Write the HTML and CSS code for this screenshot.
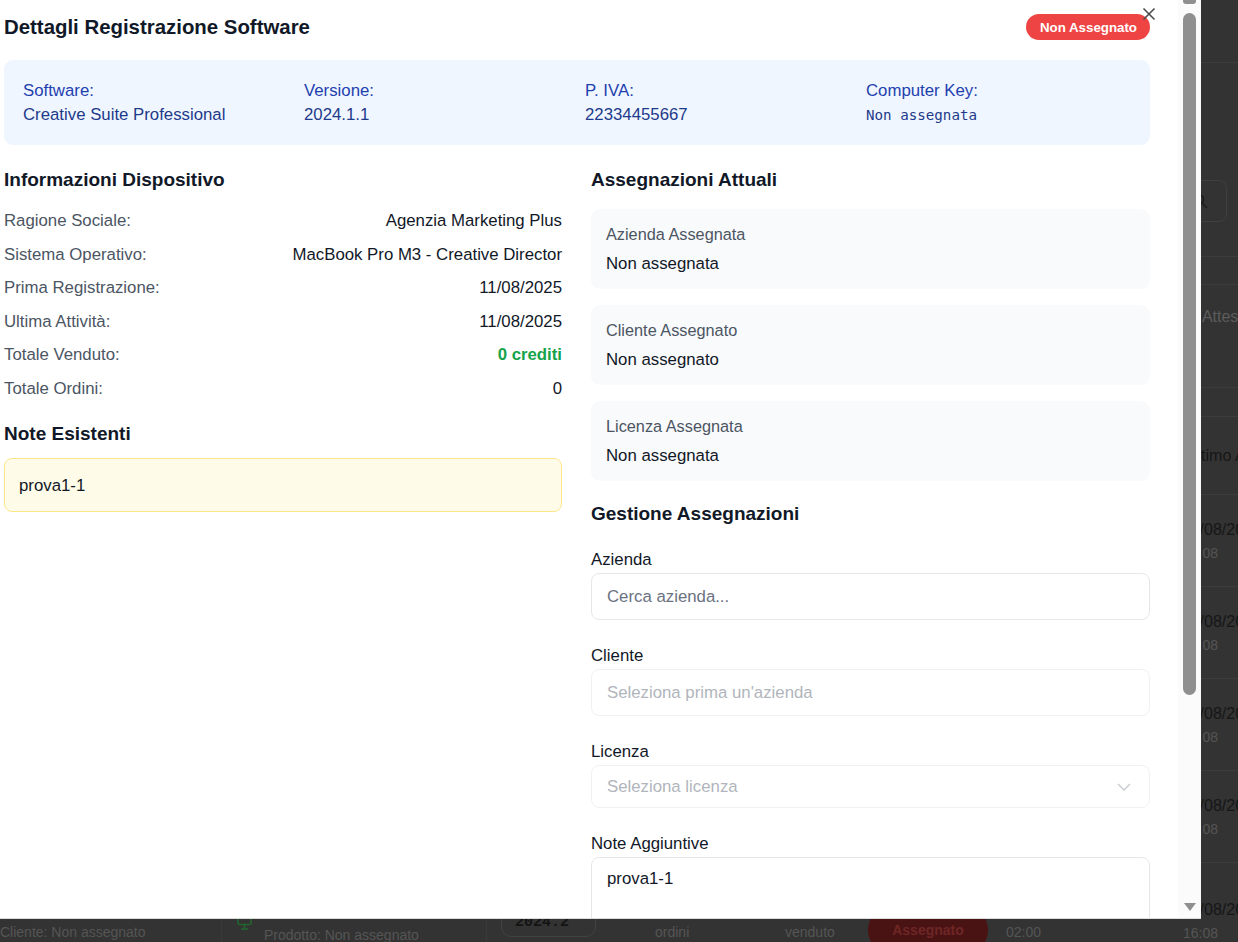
FILE: index.html
```html
<!DOCTYPE html>
<html lang="it">
<head>
<meta charset="utf-8">
<title>Dettagli Registrazione Software</title>
<link rel="stylesheet" href="styles.css">
</head>
<body>
<div class="page">
  <div class="pg-top"></div>
  <div class="pg-toolbar">
    <div class="pg-search">
      <svg class="pg-search-icon" width="16" height="16" viewBox="0 0 16 16"><circle cx="6.5" cy="6.5" r="5" fill="none" stroke="#1c1c1c" stroke-width="1.6"/><line x1="10.2" y1="10.2" x2="14.5" y2="14.5" stroke="#1c1c1c" stroke-width="1.6" stroke-linecap="round"/></svg>
    </div>
  </div>
  <div class="pg-tabs"></div>
  <div class="pg-grid pg-stats"><div class="pg-last pg-stat">In Attesa</div></div>
  <div class="pg-gap"></div>
  <div class="pg-grid pg-thead"><div class="pg-last pg-th">Ultimo Accesso</div></div>
  <div class="pg-grid pg-row"><div class="pg-last"><div class="pg-date">11/08/2025</div><div class="pg-sub">16:08</div></div></div>
  <div class="pg-grid pg-row"><div class="pg-last"><div class="pg-date">11/08/2025</div><div class="pg-sub">16:08</div></div></div>
  <div class="pg-grid pg-row"><div class="pg-last"><div class="pg-date">11/08/2025</div><div class="pg-sub">16:08</div></div></div>
  <div class="pg-grid pg-row"><div class="pg-last"><div class="pg-date">11/08/2025</div><div class="pg-sub">16:08</div></div></div>
  <div class="pg-grid pg-row pg-row-big">
    <div class="pg-cell pg-c1"><div class="pg-main">Agenzia Design</div><div class="pg-sub">Cliente: Non assegnato</div></div>
    <div class="pg-cell pg-c2">
      <svg class="pg-monitor" width="16" height="20" viewBox="0 0 16 20"><rect x="1" y="2" width="13" height="10.5" rx="1.5" fill="none" stroke="#22652f" stroke-width="1.6"/><line x1="7.5" y1="12.5" x2="7.5" y2="16.5" stroke="#22652f" stroke-width="1.6"/><line x1="4" y1="17" x2="11" y2="17" stroke="#22652f" stroke-width="1.6"/></svg>
      <div><div class="pg-main pg-bold">Modeling</div><div class="pg-sub">Prodotto: Non assegnato</div></div>
    </div>
    <div class="pg-cell pg-c3"><span class="pg-ver">2024.2</span></div>
    <div class="pg-cell pg-c4"><div class="pg-main">0</div><div class="pg-sub">ordini</div></div>
    <div class="pg-cell pg-c5"><div class="pg-main">0 crediti</div><div class="pg-sub">venduto</div></div>
    <div class="pg-cell pg-c6"><span class="pg-badge">Assegnato</span></div>
    <div class="pg-cell pg-c7"><div class="pg-main">11/08/2025</div><div class="pg-sub">02:00</div></div>
    <div class="pg-last"><div class="pg-date">11/08/2025</div><div class="pg-sub">16:08</div></div>
  </div>
</div>

<div class="modal">
  <div class="modal-inner">
    <header class="m-head">
      <h2 class="m-title">Dettagli Registrazione Software</h2>
      <span class="badge">Non Assegnato</span>
    </header>

    <section class="info">
      <div class="info-item"><div class="info-label">Software:</div><div class="info-val">Creative Suite Professional</div></div>
      <div class="info-item"><div class="info-label">Versione:</div><div class="info-val">2024.1.1</div></div>
      <div class="info-item"><div class="info-label">P. IVA:</div><div class="info-val">22334455667</div></div>
      <div class="info-item"><div class="info-label">Computer Key:</div><div class="info-val info-mono">Non assegnata</div></div>
    </section>

    <div class="cols">
      <div class="col">
        <h3 class="sec-title">Informazioni Dispositivo</h3>
        <div class="rows">
          <div class="row"><span class="row-label">Ragione Sociale:</span><span class="row-val">Agenzia Marketing Plus</span></div>
          <div class="row"><span class="row-label">Sistema Operativo:</span><span class="row-val">MacBook Pro M3 - Creative Director</span></div>
          <div class="row"><span class="row-label">Prima Registrazione:</span><span class="row-val">11/08/2025</span></div>
          <div class="row"><span class="row-label">Ultima Attività:</span><span class="row-val">11/08/2025</span></div>
          <div class="row"><span class="row-label">Totale Venduto:</span><span class="row-val row-green">0 crediti</span></div>
          <div class="row"><span class="row-label">Totale Ordini:</span><span class="row-val">0</span></div>
        </div>
        <h3 class="sec-title sec-note">Note Esistenti</h3>
        <div class="note">prova1-1</div>
      </div>

      <div class="col">
        <h3 class="sec-title">Assegnazioni Attuali</h3>
        <div class="cards">
          <div class="card"><div class="card-label">Azienda Assegnata</div><div class="card-val">Non assegnata</div></div>
          <div class="card"><div class="card-label">Cliente Assegnato</div><div class="card-val">Non assegnato</div></div>
          <div class="card"><div class="card-label">Licenza Assegnata</div><div class="card-val">Non assegnata</div></div>
        </div>
        <h3 class="sec-title sec-manage">Gestione Assegnazioni</h3>
        <div class="form">
          <div class="field">
            <label class="f-label">Azienda</label>
            <div class="f-input"><span class="ph">Cerca azienda...</span></div>
          </div>
          <div class="field">
            <label class="f-label">Cliente</label>
            <div class="f-input f-disabled"><span class="ph ph-light">Seleziona prima un'azienda</span></div>
          </div>
          <div class="field">
            <label class="f-label">Licenza</label>
            <div class="f-input f-select f-disabled"><span class="ph ph-light">Seleziona licenza</span>
              <svg class="chev" width="14" height="8" viewBox="0 0 14 8"><polyline points="1,1 7,7 13,1" fill="none" stroke="#c8cbd0" stroke-width="1.4"/></svg>
            </div>
          </div>
          <div class="field">
            <label class="f-label">Note Aggiuntive</label>
            <div class="f-textarea">prova1-1</div>
          </div>
        </div>
      </div>
    </div>
  </div>

  <div class="close" aria-label="Chiudi">
    <svg width="14" height="14" viewBox="0 0 14 14"><line x1="1.5" y1="1.5" x2="12.5" y2="12.5" stroke="#4b4b4b" stroke-width="1.6"/><line x1="12.5" y1="1.5" x2="1.5" y2="12.5" stroke="#4b4b4b" stroke-width="1.6"/></svg>
  </div>

  <div class="scrollbar">
    <div class="sb-top"></div>
    <div class="sb-thumb"></div>
    <svg class="sb-down" width="14" height="10" viewBox="0 0 14 10"><polygon points="1,1 13,1 7,9" fill="#8f8f8f"/></svg>
  </div>
</div>
</body>
</html>
```

FILE: styles.css
```css
* { box-sizing: border-box; }

body {
  margin: 0;
  width: 1238px;
  height: 942px;
  overflow: hidden;
  position: relative;
  background: #333333;
  font-family: "Liberation Sans", Arial, sans-serif;
  color: #111827;
}

/* ---------- background page (under the overlay) ---------- */
.page {
  display: flex;
  flex-direction: column;
  width: 1238px;
  white-space: nowrap;
}
.pg-top { height: 63px; border-bottom: 1px solid #3c3c3c; }
.pg-toolbar {
  height: 194px;
  display: flex;
  justify-content: flex-end;
  align-items: flex-start;
  padding: 117px 11px 0 0;
  border-bottom: 1px solid #3c3c3c;
}
.pg-search {
  width: 80px;
  height: 42px;
  border: 1px solid #404040;
  border-radius: 8px;
  display: flex;
  align-items: center;
  padding-left: 44px;
}
.pg-tabs { height: 28px; border-bottom: 1px solid #3c3c3c; }
.pg-grid {
  display: grid;
  grid-template-columns: 222px 265px 133px 120px 115px 145px 183px 55px;
}
.pg-last { grid-column: 8; padding-left: 0; min-width: 0; }
.pg-stats { height: 103px; border-bottom: 1px solid #3c3c3c; padding-top: 20px; }
.pg-stat { color: #5c5c5c; font-size: 16px; line-height: 24px; padding-left: 2px; }
.pg-gap { height: 29px; border-bottom: 1px solid #3c3c3c; }
.pg-thead { height: 78px; border-bottom: 1px solid #3c3c3c; align-items: center; }
.pg-th { color: #161616; font-size: 16px; line-height: 24px; padding-left: 3px; }
.pg-row { height: 92px; border-bottom: 1px solid #3c3c3c; padding-top: 23px; }
.pg-date { color: #161616; font-size: 16px; line-height: 24px; }
.pg-sub { color: #555555; font-size: 14px; line-height: 22px; }
.pg-main { color: #161616; font-size: 14px; line-height: 22px; }
.pg-bold { font-weight: 700; font-size: 16px; line-height: 26px; }
.pg-row-big { height: 116px; padding-top: 0; align-items: center; }
.pg-cell { display: flex; flex-direction: column; min-width: 0; }
.pg-c1 { border-right: 1px solid #3a3a3a; height: 100%; justify-content: center; }
.pg-c2 {
  flex-direction: row;
  gap: 11px;
  padding-left: 15px;
  align-items: flex-start;
  border-right: 1px solid #3a3a3a;
  height: 100%;
  padding-top: 35px;
}
.pg-monitor { margin-top: 14px; }
.pg-c3 { align-items: flex-start; padding-left: 14px; }
.pg-ver {
  display: flex;
  align-items: center;
  width: 95px;
  height: 31px;
  font-family: "Liberation Mono", monospace;
  font-weight: 700;
  font-size: 15px;
  color: #141414;
  border: 1px solid #424242;
  border-radius: 10px;
  padding: 2px 0 0 13px;
  margin-top: 1px;
}
.pg-c4 { padding-left: 35px; }
.pg-c5 { padding-left: 45px; }
.pg-c6 { padding-left: 13px; }
.pg-badge {
  display: inline-flex;
  align-items: center;
  justify-content: center;
  width: 120px;
  height: 50px;
  border-radius: 25px;
  background: #4a1313;
  color: #6e2626;
  font-weight: 700;
  font-size: 14px;
  margin-top: 18px;
}
.pg-c7 { padding-left: 6px; }
.pg-c7 .pg-main { color: #333; }

/* ---------- modal ---------- */
.modal {
  position: absolute;
  top: 0;
  left: 0;
  width: 1201px;
  height: 919px;
  background: #ffffff;
  border-bottom: 1px solid #dcdcdc;
  overflow: hidden;
}
.modal-inner {
  padding: 13px 51px 0 4px;
}
.m-head {
  display: flex;
  justify-content: space-between;
  align-items: center;
  height: 28px;
  margin-bottom: 19px;
}
.m-title {
  margin: 0;
  font-size: 20.4px;
  line-height: 28px;
  font-weight: 700;
  color: #111827;
}
.badge {
  display: inline-flex;
  align-items: center;
  height: 26px;
  padding: 0 13px 0 14px;
  border-radius: 13px;
  background: #ef4444;
  color: #ffffff;
  font-weight: 700;
  font-size: 13.3px;
}
.close {
  position: absolute;
  left: 1142px;
  top: 7px;
  width: 14px;
  height: 14px;
  display: flex;
}

.info {
  display: grid;
  grid-template-columns: repeat(4, 1fr);
  column-gap: 16px;
  padding: 19px 19px 18px;
  background: #eff6ff;
  border-radius: 9px;
}
.info-label { color: #1e40af; font-size: 16.8px; line-height: 24px; }
.info-val { color: #1e3a8a; font-size: 16.8px; line-height: 24px; }
.info-mono { font-family: "DejaVu Sans Mono", "Liberation Mono", monospace; font-size: 14.2px; }

.cols {
  display: grid;
  grid-template-columns: 558px 1fr;
  column-gap: 29px;
  margin-top: 21px;
}
.sec-title {
  margin: 0 0 15px;
  font-size: 19px;
  line-height: 28px;
  font-weight: 700;
  color: #111827;
}
.sec-note { margin-top: 19px; margin-bottom: 10px; }
.sec-manage { margin-top: 19px; margin-bottom: 20px; }

.rows { display: flex; flex-direction: column; gap: 9.6px; }
.row {
  display: flex;
  justify-content: space-between;
  font-size: 16.8px;
  line-height: 24px;
}
.row-label { color: #4b5563; }
.row-val { color: #111827; }
.row-green { color: #16a34a; font-weight: 700; }

.note {
  background: #fefce8;
  border: 1px solid #fde68a;
  border-radius: 8px;
  padding: 14px 14px 13px;
  font-size: 16.8px;
  line-height: 25px;
  color: #111827;
}

.cards { display: flex; flex-direction: column; gap: 16px; }
.card {
  background: #f9fafb;
  border-radius: 9px;
  padding: 13px 15px 13px;
}
.card-label { color: #4b5563; font-size: 16.3px; line-height: 24px; margin-bottom: 6px; }
.card-val { color: #111827; font-size: 16.8px; line-height: 24px; }

.form { display: flex; flex-direction: column; gap: 24px; }
.f-label {
  display: block;
  font-size: 16.8px;
  line-height: 24px;
  color: #111827;
  margin-bottom: 1px;
}
.f-input {
  height: 47px;
  border: 1px solid #e5e7eb;
  border-radius: 8px;
  display: flex;
  align-items: center;
  padding: 0 15px;
}
.f-disabled { border-color: #f0f1f3; }
.f-select { height: 43px; justify-content: space-between; }
.chev { margin-right: 3px; margin-top: 1px; }
.ph { font-size: 16.8px; color: #6b7280; }
.ph-light { color: #b1b5bc; }
.f-textarea {
  height: 120px;
  border: 1px solid #e5e7eb;
  border-radius: 8px;
  padding: 9px 15px;
  font-size: 16.8px;
  line-height: 24px;
  color: #111827;
}

/* fake scrollbar of the modal */
.scrollbar {
  position: absolute;
  top: 0;
  right: 0;
  width: 23px;
  height: 918px;
  background: #fbfbfb;
}
.sb-top {
  position: absolute;
  left: 5px;
  top: 0;
  width: 13px;
  height: 4px;
  background: #8f8f8f;
  border-radius: 0 0 3px 3px;
}
.sb-thumb {
  position: absolute;
  left: 5px;
  top: 13px;
  width: 13px;
  height: 682px;
  background: #8f8f8f;
  border-radius: 7px;
}
.sb-down {
  position: absolute;
  left: 5px;
  top: 902px;
}
```
